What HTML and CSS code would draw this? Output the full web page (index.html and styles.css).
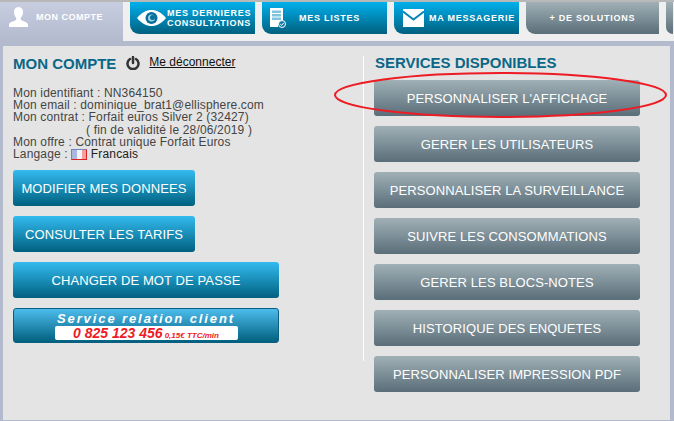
FILE: index.html
```html
<!DOCTYPE HTML>
<html>

<head>
    <meta charset="UTF-8">
    <title>Mon compte</title>
    <link rel="stylesheet" href="styles.css">
</head>

<body>
    <div class="tabs">
        <a class="tab tab-active">
            <svg class="tab-icon" width="19" height="20" viewBox="0 0 19 20"><path fill="#fff" d="M9.500 0c3 0 4.500 2.200 4.500 5 0 2.500-1 4.600-2.200 5.800v2c1.500 1.500 7.200 2 7.200 5V20H0v-2.200c0-3 5.700-3.500 7.200-5v-2C6 9.600 5 7.500 5 5c0-2.800 1.500-5 4.500-5z"/></svg>
            <span class="tab-label">MON COMPTE</span>
        </a>
        <a class="tab tab-blue tab-eye">
            <svg class="tab-icon" width="29" height="16" viewBox="0 0 29 16"><path fill="#fff" d="M0 8C4.500 2.500 9.500 0 14.500 0S24.500 2.500 29 8c-4.500 5.500-9.500 8-14.500 8S4.500 13.500 0 8z"/><circle cx="14.500" cy="8" r="6" fill="#05709c"/><circle cx="14.500" cy="8" r="3.500" fill="#9fd3e8"/><circle cx="15.500" cy="7.500" r="2.500" fill="#05709c"/></svg>
            <span class="tab-label tab-label-double"><span class="spaced">MES DERNIERES</span><br>CONSULTATIONS</span>
        </a>
        <a class="tab tab-blue tab-lists">
            <svg class="tab-icon" width="16" height="20" viewBox="0 0 16 20"><path fill="#fff" d="M0 0h13v13.500A4.500 4.500 0 0 0 8.200 19H0z"/><path fill="#7fc3de" d="M2 2.500h9V5H2zM2 6h9v2.500H2zM2 9.500h9V12H2z"/><circle cx="12" cy="16" r="3.500" fill="#0f7ba6" stroke="#fff"/><path fill="none" stroke="#fff" d="M10.200 16l1.400 1.400 2.200-2.600"/></svg>
            <span class="tab-label">MES LISTES</span>
        </a>
        <a class="tab tab-blue tab-mail">
            <svg class="tab-icon" width="21" height="18" viewBox="0 0 21 18"><rect width="21" height="18" fill="#fff"/><path fill="none" stroke="#0a84b4" stroke-width="2" d="M0 2.500l10.500 8 10.500-8"/></svg>
            <span class="tab-label">MA MESSAGERIE</span>
        </a>
        <a class="tab tab-gray tab-wide">
            <span class="tab-label">+ DE SOLUTIONS</span>
        </a>
        <a class="tab tab-gray tab-last"></a>
    </div>

    <div class="panel">
        <div class="account">
            <div class="account-head">
                <h2>MON COMPTE</h2>
                <svg class="power" width="14" height="14" viewBox="0 0 14 14"><path fill="none" stroke="#333" stroke-width="2.500" stroke-linecap="round" d="M4 3a5.500 5.500 0 1 0 6 0M7 1v6"/></svg>
                <a class="logout">Me déconnecter</a>
            </div>
            <div class="infos">
                <div>Mon identifiant : NN364150</div>
                <div>Mon email : dominique_brat1@ellisphere.com</div>
                <div>Mon contrat : Forfait euros Silver 2 (32427)</div>
                <div class="validity">( fin de validité le 28/06/2019 )</div>
                <div>Mon offre : Contrat unique Forfait Euros</div>
                <div>Langage : <span class="flag"><i></i><i></i><i></i></span> <span class="lang">Francais</span></div>
            </div>
            <div class="actions">
                <a class="btn btn-blue btn-small">MODIFIER MES DONNEES</a>
                <a class="btn btn-blue btn-small">CONSULTER LES TARIFS</a>
                <a class="btn btn-blue btn-large">CHANGER DE MOT DE PASSE</a>
                <div class="phone-box">
                    <div class="phone-title">Service relation client</div>
                    <div class="phone-number"><b>0 825 123 456</b><small>0,15€ TTC/min</small></div>
                </div>
            </div>
        </div>

        <div class="services">
            <h2>SERVICES DISPONIBLES</h2>
            <a class="btn btn-gray">PERSONNALISER L'AFFICHAGE</a>
            <a class="btn btn-gray">GERER LES UTILISATEURS</a>
            <a class="btn btn-gray">PERSONNALISER LA SURVEILLANCE</a>
            <a class="btn btn-gray">SUIVRE LES CONSOMMATIONS</a>
            <a class="btn btn-gray">GERER LES BLOCS-NOTES</a>
            <a class="btn btn-gray">HISTORIQUE DES ENQUETES</a>
            <a class="btn btn-gray">PERSONNALISER IMPRESSION PDF</a>
        </div>

        <svg class="highlight" width="336" height="48" viewBox="0 0 336 48"><ellipse cx="167.500" cy="24" rx="165.500" ry="22" fill="none" stroke="#ed1c24" stroke-width="2"/></svg>
    </div>
</body>

</html>
```

FILE: styles.css
```css
html, body {
    margin: 0;
    height: 421px;
    overflow: hidden;
}

body {
    background-color: #efefef;
    border-top: 2px solid #b8b8b8;
    box-sizing: border-box;
    font-family: "Liberation Sans", Arial, sans-serif;
}

.tabs {
    display: flex;
    gap: 7px;
    height: 39px;
    align-items: flex-start;
}

.tab {
    display: flex;
    flex: none;
    align-items: center;
    box-sizing: border-box;
    width: 125px;
    height: 32px;
    border-bottom-left-radius: 9px;
    color: #fff;
    font-size: 9px;
    font-weight: bold;
    letter-spacing: 0.750px;
    white-space: nowrap;
}

.tab-active {
    width: 123px;
    height: 39px;
    padding: 0 0 10px 9px;
    gap: 8px;
    border-radius: 0;
    background: linear-gradient(#c8cee0, #b3bacd);
    letter-spacing: 0.500px;
}

.tab-blue {
    background: linear-gradient(#00b0ec, #00607f);
}

.tab-gray {
    background: linear-gradient(#a0b0b6, #5a6e79);
}

.tab-eye {
    padding-left: 7px;
    gap: 1px;
}

.tab-lists {
    padding-left: 8px;
    gap: 13px;
}

.tab-mail {
    padding-left: 9px;
    gap: 5px;
}

.tab-wide {
    width: 133px;
    justify-content: center;
}

.tab-last {
    width: 7px;
}

.tab-label-double {
    padding-bottom: 1px;
    line-height: 10px;
    letter-spacing: 0.650px;
}

.spaced {
    letter-spacing: 0.750px;
}

.panel {
    display: grid;
    grid-template-columns: 361px 1fr;
    align-items: start;
    box-sizing: border-box;
    width: 674px;
    height: 380px;
    border: solid #b3bacd;
    border-width: 5px 4px 1px 3px;
    background-color: #e4e4e4;
    position: relative;
}

h2 {
    margin: 0;
    font-size: 15px;
    line-height: 16px;
    color: #0b6787;
}

.account {
    box-sizing: border-box;
    height: 305px;
    margin-top: 10px;
    padding-left: 10px;
    border-right: 1px solid #fff;
}

.account-head {
    display: flex;
    align-items: flex-start;
}

.power {
    margin: 0 0 0 10px;
}

.logout {
    margin-left: 9px;
    font-size: 12px;
    line-height: 12px;
    color: #111;
    text-decoration: underline;
}

.infos {
    margin-top: 15px;
    font-size: 12px;
    line-height: 12.200px;
    letter-spacing: 0.160px;
    color: #444;
}

.validity {
    padding-left: 73px;
}

.flag {
    display: inline-flex;
    box-sizing: border-box;
    width: 16px;
    height: 11px;
    vertical-align: -1px;
    border: 1px solid;
    border-color: #6f85c4 #d22 #d22 #6f85c4;
}

.flag i {
    flex: 1;
    background-color: #f3f3f8;
}

.flag i:first-child {
    background-color: #a9b7e0;
}

.flag i:last-child {
    background-color: #f2a0a0;
}

.lang {
    color: #222;
}

.actions {
    display: flex;
    flex-direction: column;
    align-items: flex-start;
    gap: 10px;
    margin-top: 10px;
}

.btn {
    display: flex;
    flex: none;
    align-items: center;
    justify-content: center;
    box-sizing: border-box;
    height: 36px;
    border-radius: 3px;
    color: #fff;
    font-size: 13px;
    letter-spacing: 0.100px;
}

.btn-blue {
    background: linear-gradient(#33bbf0, #00607f);
}

.btn-small {
    width: 182px;
}

.btn-large {
    width: 266px;
}

.btn-gray {
    width: 266px;
    background: linear-gradient(#a0b0b6, #5a6e79);
}

.phone-box {
    box-sizing: border-box;
    width: 266px;
    height: 35px;
    border: 1px solid #0a5f80;
    border-radius: 3px;
    background: linear-gradient(#4dbcec, #00607f);
    text-align: center;
    font-style: italic;
    font-weight: bold;
}

.phone-title {
    height: 17px;
    color: #fff;
    font-size: 13px;
    line-height: 19px;
    letter-spacing: 1.900px;
}

.phone-number {
    width: 183px;
    height: 14px;
    margin: 0 auto;
    border-radius: 2px;
    background-color: #fff;
    color: #ed1c24;
    font-size: 14px;
    line-height: 14px;
    white-space: nowrap;
}

.phone-number small {
    margin-left: 2px;
    font-size: 8px;
}

.services {
    display: flex;
    flex-direction: column;
    gap: 10px;
    margin-top: 9px;
    padding-left: 10px;
}

.services h2 {
    padding-left: 1px;
    margin-bottom: -1px;
    white-space: nowrap;
}

.highlight {
    position: absolute;
    left: 330px;
    top: 25px;
}
```
